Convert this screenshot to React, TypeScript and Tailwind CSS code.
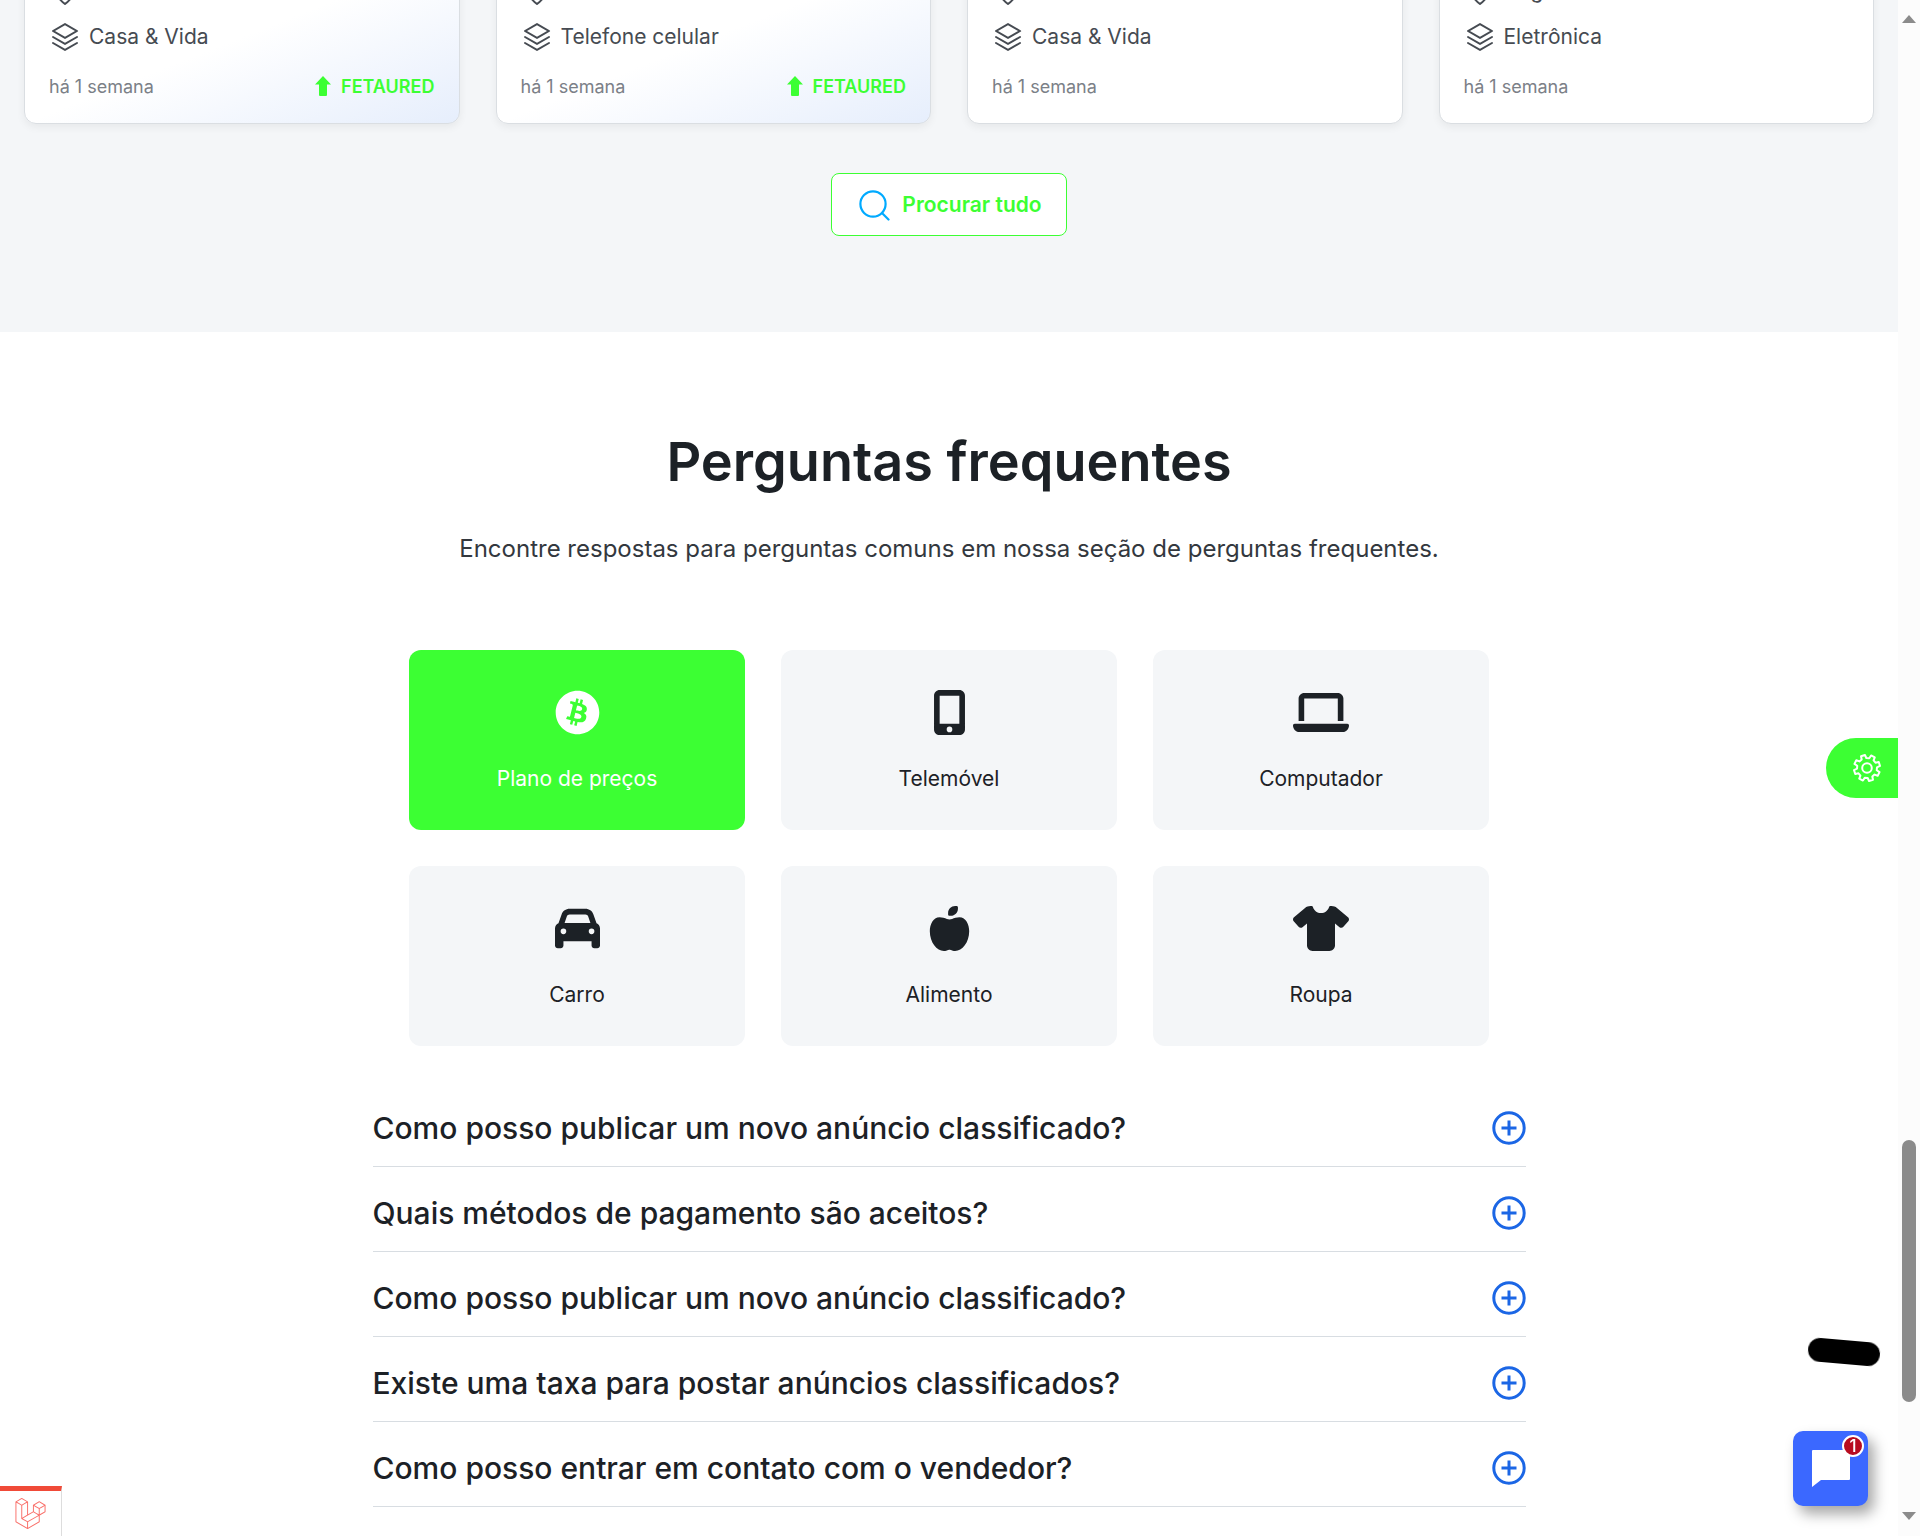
import { useState } from 'react';
import type { IconType } from 'react-icons';
import { FaAppleWhole, FaBitcoin, FaCar, FaLaptop, FaMobileScreenButton, FaShirt } from 'react-icons/fa6';
import { PiMapPin, PiStack } from 'react-icons/pi';
import { SiLaravel } from 'react-icons/si';

type Ad = {
  id: number;
  place?: string;
  category: string;
  time: string;
  featured: boolean;
};

const ads: Ad[] = [
  { id: 1, category: 'Casa & Vida', time: 'há 1 semana', featured: true },
  { id: 2, category: 'Telefone celular', time: 'há 1 semana', featured: true },
  { id: 3, category: 'Casa & Vida', time: 'há 1 semana', featured: false },
  { id: 4, place: 'Angola', category: 'Eletrônica', time: 'há 1 semana', featured: false },
];

// laptop e camiseta são mais largos que os outros ícones
const topics: { label: string; Icon: IconType; wide?: boolean }[] = [
  { label: 'Plano de preços', Icon: FaBitcoin },
  { label: 'Telemóvel', Icon: FaMobileScreenButton },
  { label: 'Computador', Icon: FaLaptop, wide: true },
  { label: 'Carro', Icon: FaCar },
  { label: 'Alimento', Icon: FaAppleWhole },
  { label: 'Roupa', Icon: FaShirt, wide: true },
];

const questions = [
  'Como posso publicar um novo anúncio classificado?',
  'Quais métodos de pagamento são aceitos?',
  'Como posso publicar um novo anúncio classificado?',
  'Existe uma taxa para postar anúncios classificados?',
  'Como posso entrar em contato com o vendedor?',
];

// contorno da engrenagem: 8 dentes, cada um com 4 pontos
const gearPoints = Array.from({ length: 8 }, (_, tooth) => {
  const center = tooth * 45 - 108;
  return [
    [10, -14],
    [13.2, -9],
    [13.2, 9],
    [10, 14],
  ].map(([radius, offset]) => {
    const angle = ((center + offset) * Math.PI) / 180;
    return `${(15 + radius * Math.cos(angle)).toFixed(2)},${(15 + radius * Math.sin(angle)).toFixed(2)}`;
  });
})
  .flat()
  .join(' ');

const GearIcon = () => (
  <svg viewBox="0 0 30 30" className="size-[30px]" fill="none" stroke="currentColor" strokeWidth="2" strokeLinejoin="round" aria-hidden="true">
    <polygon points={gearPoints} />
    <circle cx="15" cy="15" r="4.8" />
  </svg>
);

const AdCard = ({ ad }: { ad: Ad }) => (
  <article
    className={`rounded-xl border border-[#dadee2] px-6 pt-6 pb-[22px] shadow-[0_3px_8px_rgba(0,0,0,0.06)] ${
      ad.featured ? 'bg-linear-to-br from-white from-50% to-[#e6eefc]' : 'bg-white'
    }`}
  >
    <div className="flex h-8 items-center gap-2 text-[21px] text-[#464b52]">
      <PiMapPin className="size-8 shrink-0" />
      {ad.place && <span>{ad.place}</span>}
    </div>
    <div className="mt-[14px] flex h-8 items-center gap-2 text-[21px] text-[#464b52]">
      <PiStack className="size-8 shrink-0" />
      <span>{ad.category}</span>
    </div>
    <div className="mt-[18px] flex h-[30px] items-center justify-between text-[18px]">
      <span className="text-[#7b8087]">{ad.time}</span>
      {ad.featured && (
        <span className="flex items-center gap-[10px] font-semibold text-[#3cff33]">
          <svg viewBox="0 0 16 20" className="h-5 w-4" fill="currentColor" aria-hidden="true">
            <path d="M8 0 L16 8.4 H12 V19 Q12 20 11 20 H5 Q4 20 4 19 V8.4 H0 Z" />
          </svg>
          FETAURED
        </span>
      )}
    </div>
  </article>
);

const App = () => {
  const [activeTopic, setActiveTopic] = useState(0);

  return (
    <div className="flex h-screen overflow-hidden bg-white font-['Inter',sans-serif] text-[#1c2126]">
      <main className="min-w-0 flex-1 overflow-hidden">
        {/* anúncios */}
        <section className="bg-[#f4f6f8] px-6 pb-24">
          <div className="-mt-[50px] grid grid-cols-4 gap-9">
            {ads.map((ad) => (
              <AdCard key={ad.id} ad={ad} />
            ))}
          </div>
          <div className="mt-[49px] flex justify-center">
            <button className="flex h-[63px] cursor-pointer items-center gap-3 rounded-lg border border-[#3cff33] bg-white px-6 text-[21px] font-semibold text-[#3cff33]">
              <svg viewBox="0 0 34 34" className="size-[34px] text-[#00aaff]" fill="none" stroke="currentColor" strokeWidth="2.2" strokeLinecap="round" aria-hidden="true">
                <circle cx="17" cy="16" r="12.6" />
                <path d="M26 25 L32.5 31.5" />
              </svg>
              Procurar tudo
            </button>
          </div>
        </section>

        {/* perguntas frequentes */}
        <section className="px-6 pt-24">
          <h2 className="text-center text-[54px] leading-[68px] font-semibold">Perguntas frequentes</h2>
          <p className="mt-[35px] text-center text-[24px] leading-9 text-[#33383e]">
            Encontre respostas para perguntas comuns em nossa seção de perguntas frequentes.
          </p>

          <div className="mx-auto mt-[83px] grid max-w-[1080px] grid-cols-3 gap-9">
            {topics.map(({ label, Icon, wide }, index) => (
              <button
                key={label}
                onClick={() => setActiveTopic(index)}
                className={`flex cursor-pointer flex-col items-center rounded-xl pt-10 pb-[35px] ${
                  index === activeTopic ? 'bg-[#3cff33] text-white' : 'bg-[#f4f6f8]'
                }`}
              >
                <Icon className={wide ? 'h-[45px] w-14' : 'h-[45px] w-auto'} />
                <span className="mt-7 text-[21px] leading-8">{label}</span>
              </button>
            ))}
          </div>

          <div className="mx-auto mt-9 max-w-[1153px]">
            {questions.map((question, index) => (
              <button
                key={index}
                className="flex w-full cursor-pointer items-center justify-between border-b border-[#d8dde2] pt-7 pb-5 text-left text-[30px] leading-9 font-medium"
              >
                {question}
                <svg viewBox="0 0 34 34" className="size-[34px]" fill="none" stroke="#1b66e5" strokeWidth="3" aria-hidden="true">
                  <circle cx="17" cy="17" r="15.2" />
                  <path d="M17 9.5 V24.5 M9.5 17 H24.5" />
                </svg>
              </button>
            ))}
          </div>
        </section>
      </main>

      {/* barra de rolagem */}
      <div className="flex w-[22px] shrink-0 flex-col items-center bg-[#fcfcfc] pt-[15px] pb-4">
        <svg viewBox="0 0 14 8" className="h-2 w-[14px]" fill="#8b8b8b" aria-hidden="true">
          <path d="M7 0 L14 8 H0 Z" />
        </svg>
        <div className="min-h-0 w-full flex-[1117]" />
        <div className="min-h-0 w-[14px] flex-[262] rounded-full bg-[#8b8b8b]" />
        <div className="min-h-0 w-full flex-[110]" />
        <svg viewBox="0 0 14 8" className="h-2 w-[14px]" fill="#8b8b8b" aria-hidden="true">
          <path d="M0 0 H14 L7 8 Z" />
        </svg>
      </div>

      {/* configurações */}
      <button
        aria-label="Configurações"
        className="fixed top-1/2 right-[22px] flex h-[60px] w-[72px] -translate-y-1/2 cursor-pointer items-center justify-end rounded-l-full bg-[#3cff33] pr-4 text-white"
      >
        <GearIcon />
      </button>

      <div className="fixed right-10 bottom-[172px] h-6 w-[72px] rotate-[5deg] rounded-full bg-black" />

      {/* chat */}
      <button
        aria-label="Chat"
        className="fixed right-[52px] bottom-[30px] flex size-[75px] cursor-pointer items-center justify-center rounded-[10px] bg-[#3b68ff] shadow-[6px_8px_14px_rgba(0,0,0,0.35)]"
      >
        <svg viewBox="0 0 38 37" className="h-[37px] w-[38px]" fill="white" aria-hidden="true">
          <path d="M1 0 H37 Q38 0 38 1 V29 Q38 30 37 30 H9 L0 37 V1 Q0 0 1 0 Z" />
        </svg>
        <span className="absolute top-1 right-1 flex size-[22px] items-center justify-center rounded-full border-2 border-white bg-[#b80c20] text-[17px] leading-none font-medium text-white">
          1
        </span>
      </button>

      {/* barra de depuração */}
      <button
        aria-label="Laravel"
        className="fixed bottom-0 left-0 flex h-[50px] w-[62px] cursor-pointer items-center justify-center border-t-5 border-r border-t-[#f04a38] border-r-[#dddddd] bg-white text-[#f9706a]"
      >
        <SiLaravel className="size-[31px]" />
      </button>
    </div>
  );
};

export default App;
